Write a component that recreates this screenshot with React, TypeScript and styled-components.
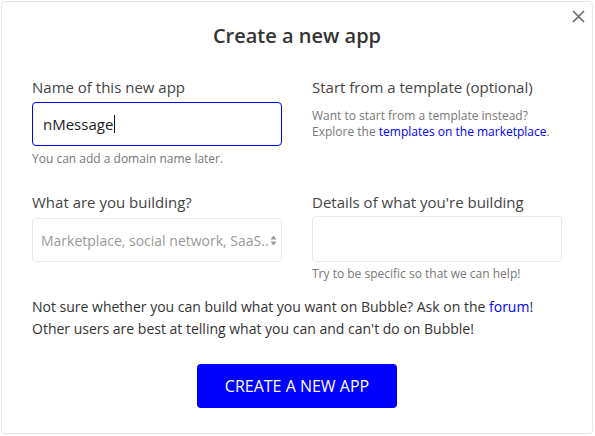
import styled, { createGlobalStyle } from 'styled-components'

const GlobalStyle = createGlobalStyle`
  html, body {
    margin: 0;
    padding: 0;
    background: #ffffff;
  }
  body {
    font-family: 'Open Sans', 'Liberation Sans', sans-serif;
    color: #333333;
  }
  * {
    box-sizing: border-box;
  }
`

const Modal = styled.div`
  position: relative;
  margin: 1px;
  width: 592px;
  height: 433px;
  border: 1px solid #e6e6e6;
  border-radius: 4px;
  background: #ffffff;
  padding: 20px 30px 0;
  display: flex;
  flex-direction: column;
`

const CloseButton = styled.button`
  position: absolute;
  top: 6px;
  right: 5px;
  width: 17px;
  height: 17px;
  padding: 0;
  border: none;
  background: transparent;
  display: flex;
  align-items: center;
  justify-content: center;
  cursor: pointer;
`

const Title = styled.h1`
  margin: 0;
  font-size: 20px;
  line-height: 28px;
  font-weight: 600;
  text-align: center;
  color: #333333;
`

const FormGrid = styled.div`
  display: grid;
  grid-template-columns: 250px 250px;
  column-gap: 30px;
  row-gap: 25px;
  margin-top: 27px;
`

const Field = styled.div`
  display: flex;
  flex-direction: column;
`

const Label = styled.div<{ $gap: number }>`
  font-size: 15px;
  line-height: 20px;
  color: #444444;
  margin-bottom: ${({ $gap }) => $gap}px;
`

const TextField = styled.div`
  height: 44px;
  border: 1px solid #0000ff;
  border-radius: 4px;
  padding: 0 10px;
  display: flex;
  align-items: center;
  font-size: 15px;
  color: #222222;
`

const Caret = styled.span`
  display: inline-block;
  width: 1px;
  height: 18px;
  margin-left: 1px;
  background: #111111;
`

const SelectBox = styled.div`
  height: 44px;
  border: 1px solid #e8e8e8;
  border-radius: 4px;
  padding: 0 4px 0 8px;
  display: flex;
  align-items: center;
  justify-content: space-between;
`

const SelectText = styled.span`
  white-space: nowrap;
  font-size: 14px;
  color: #9a9a9a;
`

const TextArea = styled.div`
  height: 46px;
  border: 1px solid #e8e8e8;
  border-radius: 4px;
`

const Help = styled.div<{ $gap: number }>`
  font-size: 12px;
  line-height: 16px;
  color: #777777;
  margin-top: ${({ $gap }) => $gap}px;
`

const Link = styled.a`
  color: #0000ff;
  text-decoration: none;
`

const Note = styled.p`
  margin: 14px 0 0;
  font-size: 14px;
  line-height: 22px;
  color: #333333;
`

const PrimaryButton = styled.button`
  align-self: center;
  margin-top: 24px;
  width: 200px;
  height: 44px;
  border: none;
  border-radius: 4px;
  background: #0000ff;
  color: #ffffff;
  font-family: 'Open Sans', 'Liberation Sans', sans-serif;
  font-size: 16px;
  text-transform: uppercase;
  cursor: pointer;
`

const CloseIcon = () => (
  <svg width="13" height="13" viewBox="0 0 13 13" aria-hidden="true">
    <path d="M1 1 L12 12 M12 1 L1 12" stroke="#666666" strokeWidth="1.6" />
  </svg>
)

const SortArrows = () => (
  <svg width="7" height="11" viewBox="0 0 7 11" aria-hidden="true">
    <path d="M3.5 0.5 L6.5 4.5 L0.5 4.5 Z M3.5 10.5 L6.5 6.5 L0.5 6.5 Z" fill="#999999" />
  </svg>
)

export default function App() {
  return (
    <>
      <GlobalStyle />
      <Modal role="dialog" aria-labelledby="new-app-title">
        <CloseButton type="button" aria-label="Close">
          <CloseIcon />
        </CloseButton>
        <Title id="new-app-title">Create a new app</Title>
        <FormGrid>
          <Field>
            <Label $gap={5}>Name of this new app</Label>
            <TextField>
              nMessage
              <Caret />
            </TextField>
            <Help $gap={5}>You can add a domain name later.</Help>
          </Field>
          <Field>
            <Label $gap={11}>Start from a template (optional)</Label>
            <Help $gap={0}>
              Want to start from a template instead?
              <br />
              Explore the <Link href="#">templates on the marketplace</Link>.
            </Help>
          </Field>
          <Field>
            <Label $gap={6}>What are you building?</Label>
            <SelectBox>
              <SelectText>Marketplace, social network, SaaS..</SelectText>
              <SortArrows />
            </SelectBox>
          </Field>
          <Field>
            <Label $gap={4}>Details of what you're building</Label>
            <TextArea />
            <Help $gap={4}>Try to be specific so that we can help!</Help>
          </Field>
        </FormGrid>
        <Note>
          Not sure whether you can build what you want on Bubble? Ask on the{' '}
          <Link href="#">forum</Link>!
          <br />
          Other users are best at telling what you can and can't do on Bubble!
        </Note>
        <PrimaryButton type="button">Create a new app</PrimaryButton>
      </Modal>
    </>
  )
}
